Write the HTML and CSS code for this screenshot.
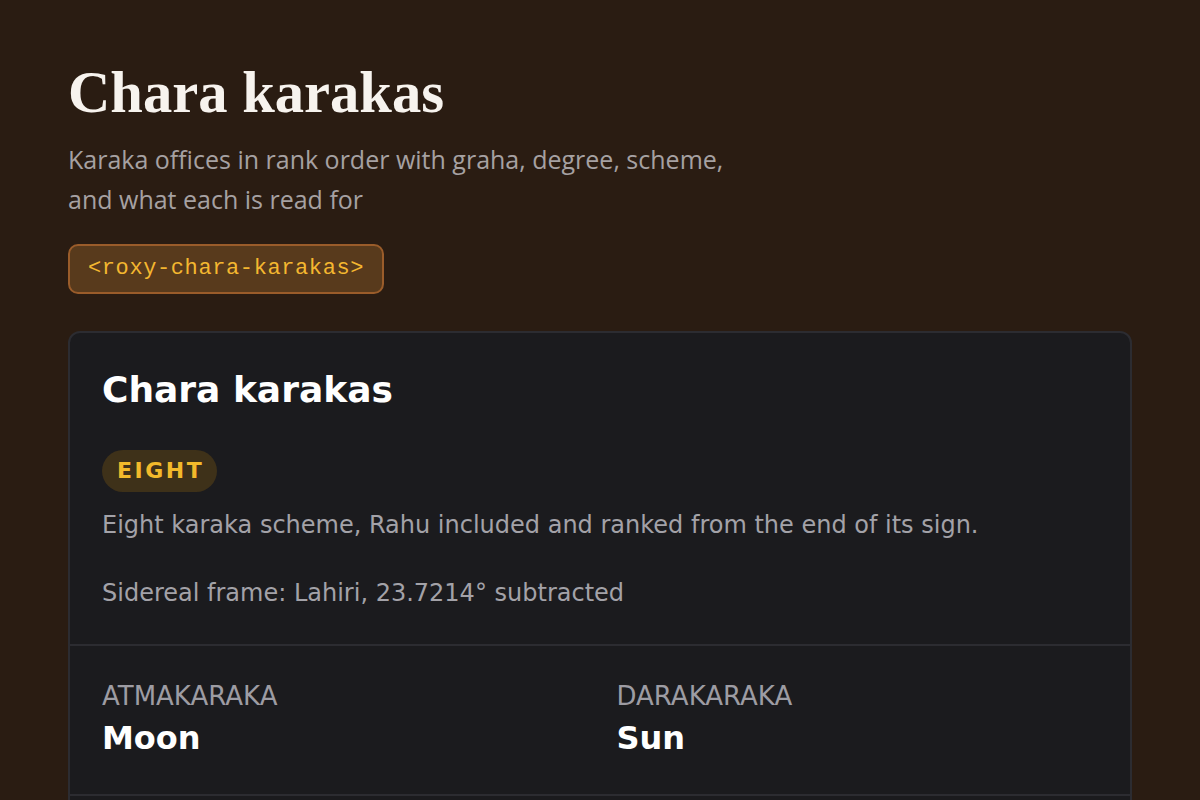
FILE: index.html
```html
<!DOCTYPE html>
<html lang="en">
<head>
    <meta charset="UTF-8">
    <title>Chara karakas</title>
    <link rel="stylesheet" href="styles.css">
</head>
<body>
<div class="page">
    <header class="intro">
        <h1>Chara karakas</h1>
        <p class="lead">Karaka offices in rank order with graha, degree, scheme,<br>and what each is read for</p>
        <code class="tag">&lt;roxy-chara-karakas&gt;</code>
    </header>

    <section class="card">
        <div class="card-head">
            <h2>Chara karakas</h2>
            <span class="badge">EIGHT</span>
            <p class="note">Eight karaka scheme, Rahu included and ranked from the end of its sign.</p>
            <p class="note">Sidereal frame: Lahiri, 23.7214° subtracted</p>
        </div>
        <div class="row">
            <div class="cell">
                <div class="label">ATMAKARAKA</div>
                <div class="value">Moon</div>
            </div>
            <div class="cell">
                <div class="label">DARAKARAKA</div>
                <div class="value">Sun</div>
            </div>
        </div>
        <div class="row">
            <div class="cell">
                <div class="label">AMATYAKARAKA</div>
                <div class="value">Mars</div>
            </div>
            <div class="cell">
                <div class="label">PUTRAKARAKA</div>
                <div class="value">Jupiter</div>
            </div>
        </div>
    </section>
</div>
</body>
</html>
```

FILE: styles.css
```css
body {
    margin: 0;
    background-color: #2a1c12;
    font-family: "DejaVu Sans", sans-serif;
    color: #ffffff;
}

.page {
    padding: 58px 68px 40px;
}

.intro h1 {
    font-family: "Liberation Serif", serif;
    font-weight: bold;
    font-size: 58.6px;
    line-height: 70px;
    margin: 0 0 11px;
    color: #f7f3ee;
}

.lead {
    font-family: "Open Sans", sans-serif;
    font-size: 25px;
    line-height: 40px;
    color: #a6a1a2;
    margin: 0 0 25px;
}

.tag {
    display: block;
    width: fit-content;
    font-family: "Liberation Mono", monospace;
    font-size: 22px;
    letter-spacing: 0.6px;
    line-height: 26px;
    color: #f4b730;
    background-color: #583a1c;
    border: 2px solid #9a5c2a;
    border-radius: 10px;
    padding: 10px 18px;
}

.card {
    margin-top: 37px;
    background-color: #1b1b1e;
    border: 2px solid #2c2c31;
    border-radius: 12px;
}

.card-head {
    padding: 35px 32px 35px;
    border-bottom: 2px solid #2c2c31;
}

.card h2 {
    font-size: 36px;
    line-height: 44px;
    margin: 0 0 38px;
}

.badge {
    display: block;
    width: fit-content;
    background-color: #3e3119;
    color: #f2b92b;
    font-weight: bold;
    font-size: 22px;
    letter-spacing: 2.5px;
    line-height: 42px;
    padding: 0 13px 0 15px;
    border-radius: 21px;
}

.note {
    font-size: 24px;
    line-height: 32px;
    color: #a3a2a8;
    margin: 17px 0 0;
}

.note + .note {
    margin-top: 36px;
}

.row {
    display: grid;
    grid-template-columns: 1fr 1fr;
    column-gap: 33px;
    padding: 34px 32px 36px;
    border-bottom: 2px solid #2c2c31;
}

.label {
    font-size: 26px;
    line-height: 32px;
    color: #9d9ca3;
    margin-bottom: 6px;
}

.value {
    font-weight: bold;
    font-size: 32px;
    line-height: 40px;
}
```
